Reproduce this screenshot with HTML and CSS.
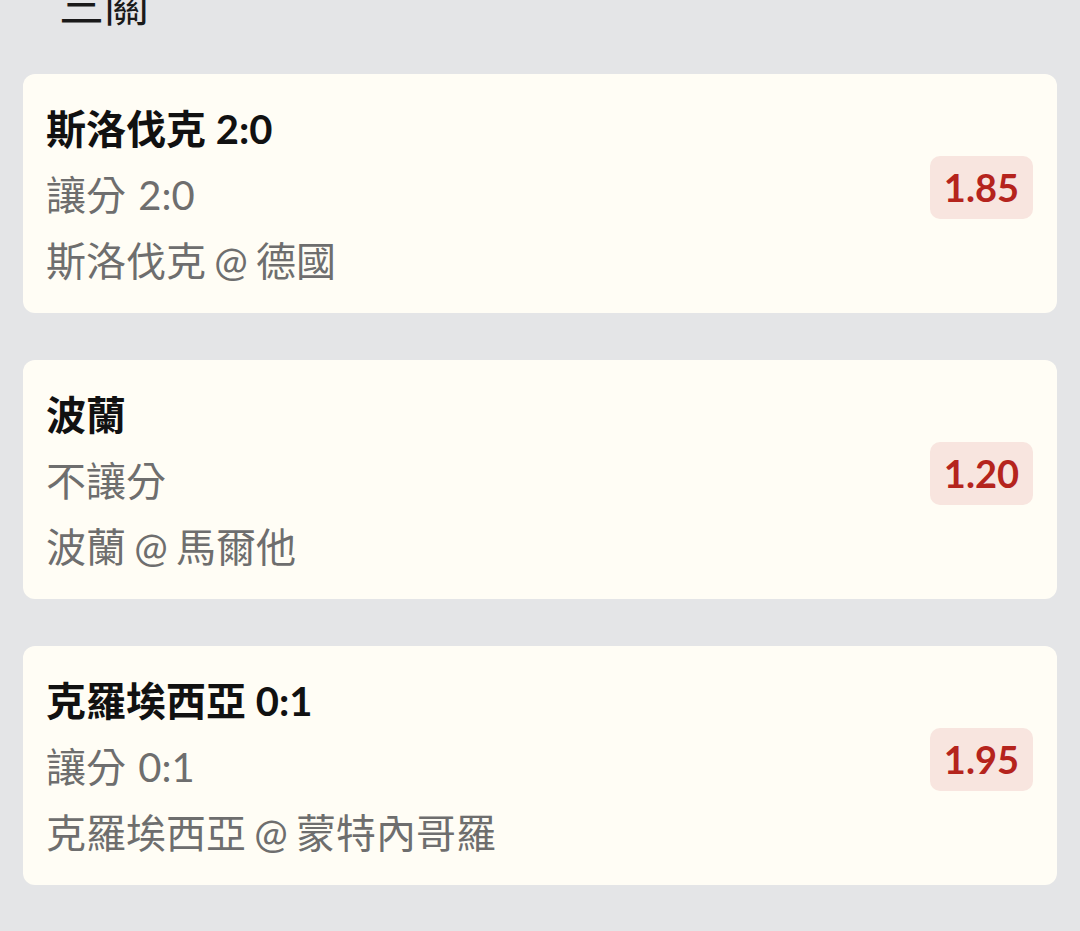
FILE: index.html
```html
<!DOCTYPE html>
<html lang="zh-Hant">
<head>
<meta charset="utf-8">
<link rel="stylesheet" href="styles.css">
</head>
<body>
<div class="page">
  <h1 class="heading">三關</h1>
  <div class="list">
    <div class="card">
      <div class="info">
        <div class="pick">斯洛伐克 2:0</div>
        <div class="market">讓分 2:0</div>
        <div class="match">斯洛伐克 @ 德國</div>
      </div>
      <div class="odds">1.85</div>
    </div>
    <div class="card">
      <div class="info">
        <div class="pick">波蘭</div>
        <div class="market">不讓分</div>
        <div class="match">波蘭 @ 馬爾他</div>
      </div>
      <div class="odds">1.20</div>
    </div>
    <div class="card">
      <div class="info">
        <div class="pick">克羅埃西亞 0:1</div>
        <div class="market">讓分 0:1</div>
        <div class="match">克羅埃西亞 @ 蒙特內哥羅</div>
      </div>
      <div class="odds">1.95</div>
    </div>
  </div>
</div>
</body>
</html>
```
FILE: styles.css
```css
html, body {
  margin: 0;
  padding: 0;
  background: #e4e5e7;
}
body {
  font-family: Lato, "Noto Sans CJK TC", sans-serif;
  overflow: hidden;
  height: 931px;
}
.page {
  padding: 0 23px;
  margin-top: -28px;
}
.heading {
  margin: 0;
  padding-left: 36px;
  font-size: 45px;
  font-weight: 400;
  line-height: 66px;
  color: #1a1a1a;
  height: 54px;
}
.list {
  display: flex;
  flex-direction: column;
  gap: 47px;
  margin-top: 48px;
}
.card {
  background: #fffdf5;
  border-radius: 12px;
  height: 239px;
  box-sizing: border-box;
  padding: 22px 24px 19px 23px;
  display: flex;
  align-items: center;
  justify-content: space-between;
}
.info {
  display: flex;
  flex-direction: column;
  font-size: 40px;
  line-height: 66px;
}
.pick {
  font-weight: 700;
  color: #111111;
}
.market, .match {
  color: #6e6e6e;
}
.market {
  word-spacing: 2px;
}
.match {
  word-spacing: -2px;
}
.odds {
  background: #f8e5df;
  color: #b5241d;
  font-weight: 700;
  font-size: 38px;
  line-height: 63px;
  height: 63px;
  padding: 0 14px;
  border-radius: 10px;
  margin-bottom: 15px;
}
```
